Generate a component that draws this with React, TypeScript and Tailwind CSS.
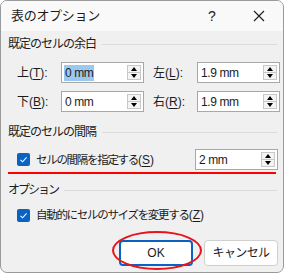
import type { JSX } from 'react';

const font = {
  fontFamily: '"Segoe UI", "Liberation Sans", "Noto Sans CJK JP", sans-serif',
};

function Spin(): JSX.Element {
  return (
    <div className="absolute right-[2px] top-[2px] bottom-[2px] flex w-[14px] flex-col border border-[#c8c8c8] bg-[#f4f4f4]">
      <div className="flex flex-1 items-center justify-center border-b border-[#c8c8c8]">
        <span className="block h-0 w-0 border-x-[3px] border-b-[4px] border-x-transparent border-b-black" />
      </div>
      <div className="flex flex-1 items-center justify-center">
        <span className="block h-0 w-0 border-x-[3px] border-t-[4px] border-x-transparent border-t-black" />
      </div>
    </div>
  );
}

function NumberBox({ value, selected = false }: { value: string; selected?: boolean }): JSX.Element {
  return (
    <div className="relative flex h-[21px] w-[83px] items-center border border-[#a8a8a8] bg-white pl-[2px] tracking-[-0.4px]">
      <span className={selected ? 'bg-[#9bc8ef] px-[1px] leading-[16px]' : 'px-[1px] leading-[16px]'}>{value}</span>
      <Spin />
    </div>
  );
}

function Heading({ text, tight }: { text: string; tight: string }): JSX.Element {
  return (
    <div className="flex items-center gap-[6px] pl-[7px] pr-[6px]">
      <span className={tight + ' leading-[16px]'}>{text}</span>
      <div className="h-px flex-1 bg-[#dcdcdc]" />
    </div>
  );
}

function Label({ main, key_ }: { main: string; key_: string }): JSX.Element {
  return (
    <span className="w-[44px] leading-[16px]">
      {main}(<span className="underline underline-offset-2">{key_}</span>):
    </span>
  );
}

function Check({ text, key_ }: { text: string; key_: string }): JSX.Element {
  return (
    <div className="flex items-center gap-[6px]">
      <div className="flex h-[13px] w-[13px] items-center justify-center rounded-[2px] bg-[#0a63c3]">
        <svg width="9" height="9" viewBox="0 0 9 9">
          <path d="M1.5 4.8 L3.6 6.8 L7.6 2.4" fill="none" stroke="white" strokeWidth="1.1" />
        </svg>
      </div>
      <span className="leading-[16px]">
        <span className="text-[11.5px] tracking-[-1.3px]">{text}</span>(<span className="underline underline-offset-2">{key_}</span>)
      </span>
    </div>
  );
}

export default function App(): JSX.Element {
  return (
    <div className="h-[274px] w-[286px] bg-white text-[12px] text-[#1b1b1b]" style={font}>
      <div className="relative flex h-[273px] w-[284px] flex-col overflow-hidden rounded-b-[7px] rounded-t-[7px] border border-[#9a9a9a] bg-[#f0f0f0]">
        <div className="flex h-[30px] items-center bg-[#f9f9f9] pl-[10px]">
          <span className="flex-1 text-[13px] tracking-[-0.3px]">表のオプション</span>
          <span className="w-[46px] text-center text-[14px]">?</span>
          <svg className="mx-[18px]" width="12" height="12" viewBox="0 0 12 12">
            <path d="M1 1 L11 11 M11 1 L1 11" stroke="#1b1b1b" strokeWidth="1.1" />
          </svg>
        </div>

        <div className="mt-[5px]">
          <Heading text="既定のセルの余白" tight="tracking-[-1px]" />
        </div>
        <div className="mt-[10px] flex flex-col gap-[8px] pl-[16px]">
          <div className="flex items-center">
            <Label main="上" key_="T" />
            <NumberBox value="0 mm" selected />
            <div className="w-[9px]" />
            <Label main="左" key_="L" />
            <NumberBox value="1.9 mm" />
          </div>
          <div className="flex items-center">
            <Label main="下" key_="B" />
            <NumberBox value="0 mm" />
            <div className="w-[9px]" />
            <Label main="右" key_="R" />
            <NumberBox value="1.9 mm" />
          </div>
        </div>

        <div className="mt-[12px]">
          <Heading text="既定のセルの間隔" tight="tracking-[-1px]" />
        </div>
        <div className="mt-[9px] flex items-center pl-[16px]">
          <div className="flex-1">
            <Check text="セルの間隔を指定する" key_="S" />
          </div>
          <div className="pr-[5px]">
            <NumberBox value="2 mm" />
          </div>
        </div>
        <div className="mx-[7px] mt-[2px] h-[2px] bg-[#ff0000]" />

        <div className="mt-[8px]">
          <Heading text="オプション" tight="tracking-[-2px]" />
        </div>
        <div className="mt-[9px] pl-[16px]">
          <Check text="自動的にセルのサイズを変更する" key_="Z" />
        </div>

        <div className="mt-[17px] flex justify-end gap-[11px] pr-[5px]">
          <button className="h-[26px] w-[74px] rounded-[4px] border-2 border-[#0a63c3] bg-white">OK</button>
          <button className="h-[26px] w-[74px] rounded-[4px] border border-[#cfcfcf] bg-white tracking-[-0.6px]">キャンセル</button>
        </div>

        <div className="pointer-events-none absolute left-[111px] top-[230px] h-[39px] w-[90px] rounded-[50%] border-2 border-[#e8141b]" />
      </div>
    </div>
  );
}
